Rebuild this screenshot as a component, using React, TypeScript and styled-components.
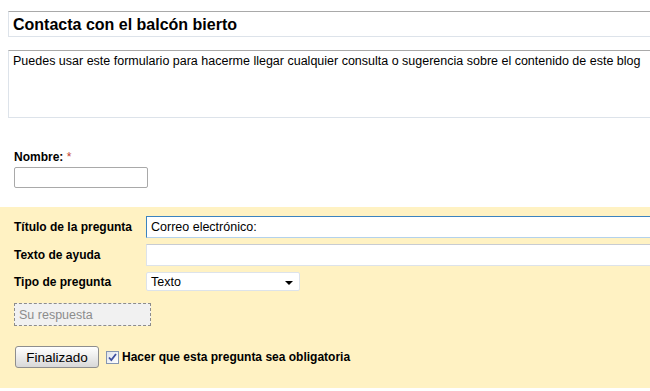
import React from 'react';
import styled, { createGlobalStyle } from 'styled-components';

const GlobalStyle = createGlobalStyle`
  html, body {
    margin: 0;
    padding: 0;
    background: #ffffff;
    overflow: hidden;
  }
  body {
    font-family: "Liberation Sans", Arial, sans-serif;
    color: #000000;
  }
`;

export default function App() {
  return (
    <>
      <GlobalStyle />
      <Page>
        <Header>
          <TitleBox>Contacta con el balcón bierto</TitleBox>
          <DescBox>
            Puedes usar este formulario para hacerme llegar cualquier consulta o sugerencia sobre el contenido de este blog
          </DescBox>
        </Header>

        <Field>
          <Label>
            Nombre: <Required>*</Required>
          </Label>
          <TextInput />
        </Field>

        <Editor>
          <EditorGrid>
            <RowLabel>Título de la pregunta</RowLabel>
            <WideInput focused>Correo electrónico:</WideInput>
            <RowLabel>Texto de ayuda</RowLabel>
            <WideInput />
            <RowLabel>Tipo de pregunta</RowLabel>
            <Select>
              <span>Texto</span>
              <Arrow />
            </Select>
          </EditorGrid>

          <Preview>Su respuesta</Preview>

          <Actions>
            <Button>Finalizado</Button>
            <CheckLabel>
              <CheckBox>
                <svg width="11" height="11" viewBox="0 0 11 11">
                  <path d="M2 5.5 L4.3 8 L9 2" fill="none" stroke="#3d4f9f" strokeWidth="1.8" />
                </svg>
              </CheckBox>
              Hacer que esta pregunta sea obligatoria
            </CheckLabel>
          </Actions>
        </Editor>
      </Page>
    </>
  );
}

const Page = styled.div`
  width: 650px;
  height: 391px;
  overflow: hidden;
`;

const Header = styled.div`
  padding: 11px 0 0 8px;
`;

const TitleBox = styled.div`
  box-sizing: border-box;
  width: 700px;
  height: 26px;
  padding: 4px 0 0 4px;
  border: 1px solid #dde3ea;
  border-top-color: #a9a9a9;
  font-size: 16px;
  font-weight: bold;
  line-height: 18px;
`;

const DescBox = styled.div`
  box-sizing: border-box;
  width: 700px;
  height: 68px;
  margin-top: 13px;
  padding: 3px 0 0 4px;
  border: 1px solid #dde3ea;
  border-top-color: #a9a9a9;
  font-size: 12.5px;
  line-height: 15px;
`;

const Field = styled.div`
  display: flex;
  flex-direction: column;
  gap: 3px;
  padding: 32px 0 0 14px;
`;

const Label = styled.div`
  font-size: 12px;
  font-weight: bold;
  line-height: 14px;
`;

const Required = styled.span`
  color: #c4402f;
  font-weight: normal;
`;

const TextInput = styled.div`
  box-sizing: border-box;
  width: 134px;
  height: 21px;
  border: 1px solid #a9a9a9;
  border-radius: 2px;
  background: #ffffff;
`;

const Editor = styled.div`
  margin-top: 19px;
  height: 181px;
  background: #fff2c3;
  padding: 9px 0 0 14px;
  box-sizing: border-box;
`;

const EditorGrid = styled.div`
  display: grid;
  grid-template-columns: 132px 1fr;
  row-gap: 6px;
  align-items: center;
`;

const RowLabel = styled.div`
  font-size: 12px;
  font-weight: bold;
  line-height: 14px;
`;

const WideInput = styled.div<{ focused?: boolean }>`
  box-sizing: border-box;
  width: 560px;
  height: 22px;
  padding: 3px 0 0 4px;
  border: 1px solid ${({ focused }) => (focused ? '#3b83c0' : '#dde3ea')};
  border-bottom-color: ${({ focused }) => (focused ? '#b4d2ec' : '#dde3ea')};
  border-top-color: ${({ focused }) => (focused ? '#3b83c0' : '#c8ccd2')};
  background: #ffffff;
  font-size: 12.5px;
  line-height: 14px;
`;

const Select = styled.div`
  box-sizing: border-box;
  width: 154px;
  height: 19px;
  display: flex;
  align-items: center;
  justify-content: space-between;
  padding: 0 6px 0 4px;
  border: 1px solid #dde3ea;
  border-radius: 2px;
  background: #ffffff;
  font-size: 12.5px;
`;

const Arrow = styled.span`
  width: 0;
  height: 0;
  border-left: 4px solid transparent;
  border-right: 4px solid transparent;
  border-top: 4px solid #000000;
  margin-top: 2px;
`;

const Preview = styled.div`
  box-sizing: border-box;
  width: 137px;
  height: 23px;
  margin-top: 12px;
  padding: 4px 0 0 4px;
  border: 1px dashed #8c8c8c;
  background: #f1f1f1;
  color: #8c8c8c;
  font-size: 12.5px;
  line-height: 14px;
`;

const Actions = styled.div`
  display: flex;
  align-items: center;
  gap: 7px;
  margin-top: 20px;
  padding-left: 1px;
`;

const Button = styled.div`
  box-sizing: border-box;
  width: 84px;
  height: 22px;
  display: flex;
  align-items: center;
  justify-content: center;
  border: 1px solid #8e8e8e;
  border-radius: 3px;
  background: linear-gradient(#ffffff, #ececec 50%, #d8d8d8);
  font-size: 13.5px;
`;

const CheckLabel = styled.div`
  display: flex;
  align-items: center;
  gap: 3px;
  font-size: 12px;
  font-weight: bold;
`;

const CheckBox = styled.span`
  box-sizing: border-box;
  width: 13px;
  height: 13px;
  display: flex;
  align-items: center;
  justify-content: center;
  border: 1px solid #8596b2;
  background: linear-gradient(135deg, #dfe3ea, #ffffff);
`;
